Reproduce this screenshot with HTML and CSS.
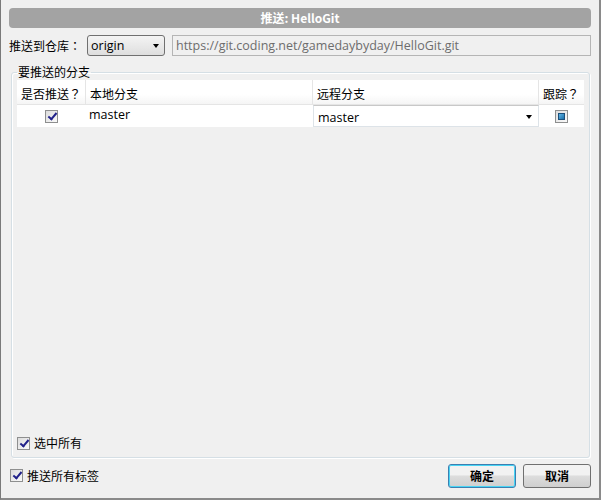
FILE: index.html
```html
<!DOCTYPE html>
<html>
<head>
<meta charset="utf-8">
<link rel="stylesheet" href="styles.css">
</head>
<body>
<div class="window">
  <div class="titlebar">推送: HelloGit</div>
  <div class="remote-row">
    <span class="label">推送到仓库<span class="fw">：</span></span>
    <div class="combo"><span>origin</span><span class="arrow"></span></div>
    <div class="url">https://git.coding.net/gamedaybyday/HelloGit.git</div>
  </div>
  <fieldset class="group">
    <legend>要推送的分支</legend>
    <div class="table">
      <div class="thead">
        <div class="th c1">是否推送<span class="fw">？</span></div>
        <div class="th c2">本地分支</div>
        <div class="th c3">远程分支</div>
        <div class="th c4">跟踪<span class="fw">？</span></div>
      </div>
      <div class="trow">
        <div class="td c1"><span class="chk checked"></span></div>
        <div class="td c2 local">master</div>
        <div class="td c3"><div class="cellcombo"><span>master</span><span class="arrow"></span></div></div>
        <div class="td c4"><span class="chk partial"></span></div>
      </div>
    </div>
    <div class="spacer"></div>
    <label class="cb"><span class="chk checked"></span>选中所有</label>
  </fieldset>
  <div class="footer">
    <label class="cb"><span class="chk checked"></span>推送所有标签</label>
    <div class="buttons">
      <button class="btn default">确定</button>
      <button class="btn">取消</button>
    </div>
  </div>
</div>
</body>
</html>
```
FILE: styles.css
```css
* { box-sizing: border-box; }
html, body { margin: 0; padding: 0; }
body {
  width: 601px; height: 500px; overflow: hidden;
  font-family: "Open Sans", "Noto Sans CJK SC", sans-serif;
  font-size: 12px; color: #000;
  background: #f0f0f0;
}
.fw { font-family: "Noto Sans CJK TC", sans-serif; }
.window {
  width: 601px; height: 500px;
  background: #f0f0f0;
  border-left: 1px solid #7a7a7a;
  border-right: 2px solid #8a8a8a;
  border-bottom: 2px solid #8a8a8a;
  padding: 8px 8px 0 8px;
  display: flex; flex-direction: column;
}
.titlebar {
  height: 20px; border-radius: 4px;
  background: #a3a3a3; color: #fff; font-weight: bold;
  text-align: center; line-height: 20px; font-size: 12px;
  font-family: "Noto Sans CJK SC", sans-serif;
}
.remote-row {
  display: flex; align-items: center; margin-top: 7px; height: 21px;
}
.label { font-family: "Noto Sans CJK SC", sans-serif; font-size: 12px; width: 78px; }
.combo {
  width: 78px; height: 21px; border: 1px solid #707070; border-radius: 3px;
  background: linear-gradient(#f4f4f4, #dedede);
  display: flex; align-items: center; justify-content: space-between;
  padding: 0 5px 0 3px; font-size: 12.5px;
}
.arrow {
  width: 0; height: 0; border-left: 3.5px solid transparent; border-right: 3.5px solid transparent;
  border-top: 4px solid #000;
}
.url {
  margin-left: 7px; flex: 1; height: 21px; border: 1px solid #b5b5b5;
  color: #6d6d6d; font-size: 12.5px; padding-left: 3px; line-height: 19px;
  background: #f0f0f0;
}
.group {
  margin: 9px 2px 0 2px; padding: 0 5px 5px 5px;
  border: 1px solid #d5dfe5; border-radius: 3px;
  flex: 1; display: flex; flex-direction: column;
  box-shadow: inset 1px 1px 0 #fff, 1px 1px 0 #fff;
}
.group legend {
  font-family: "Noto Sans CJK SC", sans-serif; font-size: 12px;
  padding: 0 1px; margin-left: 0; line-height: 14px;
}
.table { margin-top: 1px; }
.thead { display: flex; height: 25px; background: #fff; border-bottom: 1px solid #e5e5e5; }
.th {
  font-family: "Noto Sans CJK SC", sans-serif; font-size: 12px;
  line-height: 24px; padding: 2px 0 0 4px; border-right: 1px solid #e5e5e5;
  background: linear-gradient(#fff 60%, #f5f5f5);
}
.th.c4 { border-right: none; }
.c1 { width: 69px; }
.c2 { width: 227px; }
.c3 { width: 226px; }
.c4 { width: 45px; }
.trow { display: flex; height: 22px; background: #fff; }
.td { display: flex; align-items: center; }
.td.c1 { justify-content: center; }
.td.c4 { justify-content: center; }
.local { padding-left: 3px; font-size: 12.5px; align-items: flex-start; line-height: 19px; }
.cellcombo {
  width: 100%; height: 22px; border: 1px solid #dde3e8; border-top-color: #c8c8c8;
  background: #fff; display: flex; align-items: center; justify-content: space-between;
  padding: 2px 6px 0 4px; font-size: 12.5px;
}
.chk {
  display: inline-block; width: 13px; height: 13px; border: 1px solid #8e8f8f;
  background: linear-gradient(135deg, #dcdcdc, #fafafa);
  position: relative; flex: none;
}
.chk.checked::after {
  content: ""; position: absolute; left: 4px; top: 0px; width: 3px; height: 7px;
  border: solid #21218a; border-width: 0 2px 2px 0; transform: rotate(40deg);
}
.chk.partial::after {
  content: ""; position: absolute; left: 2px; top: 2px; width: 7px; height: 7px;
  background: linear-gradient(135deg, #5fb5e6, #1a6ea8); border: 1px solid #1c4f7a;
  box-sizing: border-box;
}
.spacer { flex: 1; }
.cb {
  display: flex; align-items: center; gap: 4px; line-height: 16px;
  font-family: "Noto Sans CJK SC", sans-serif; font-size: 12px;
}
.group .cb { margin-bottom: 1px; }
.footer {
  display: flex; justify-content: space-between; align-items: center;
  height: 40px; padding: 0 0 5px 1px;
}
.buttons { display: flex; gap: 7px; }
.btn {
  width: 68px; height: 24px; border: 1px solid #707070; border-radius: 3px;
  background: linear-gradient(#f2f2f2 45%, #dddddd 50%, #cfcfcf);
  font-family: "Noto Sans CJK SC", sans-serif; font-size: 12px; font-weight: bold;
  color: #000; padding: 0;
}
.btn.default { border-color: #3c7fb1; box-shadow: inset 0 0 0 1px #48d4f4; }
```
